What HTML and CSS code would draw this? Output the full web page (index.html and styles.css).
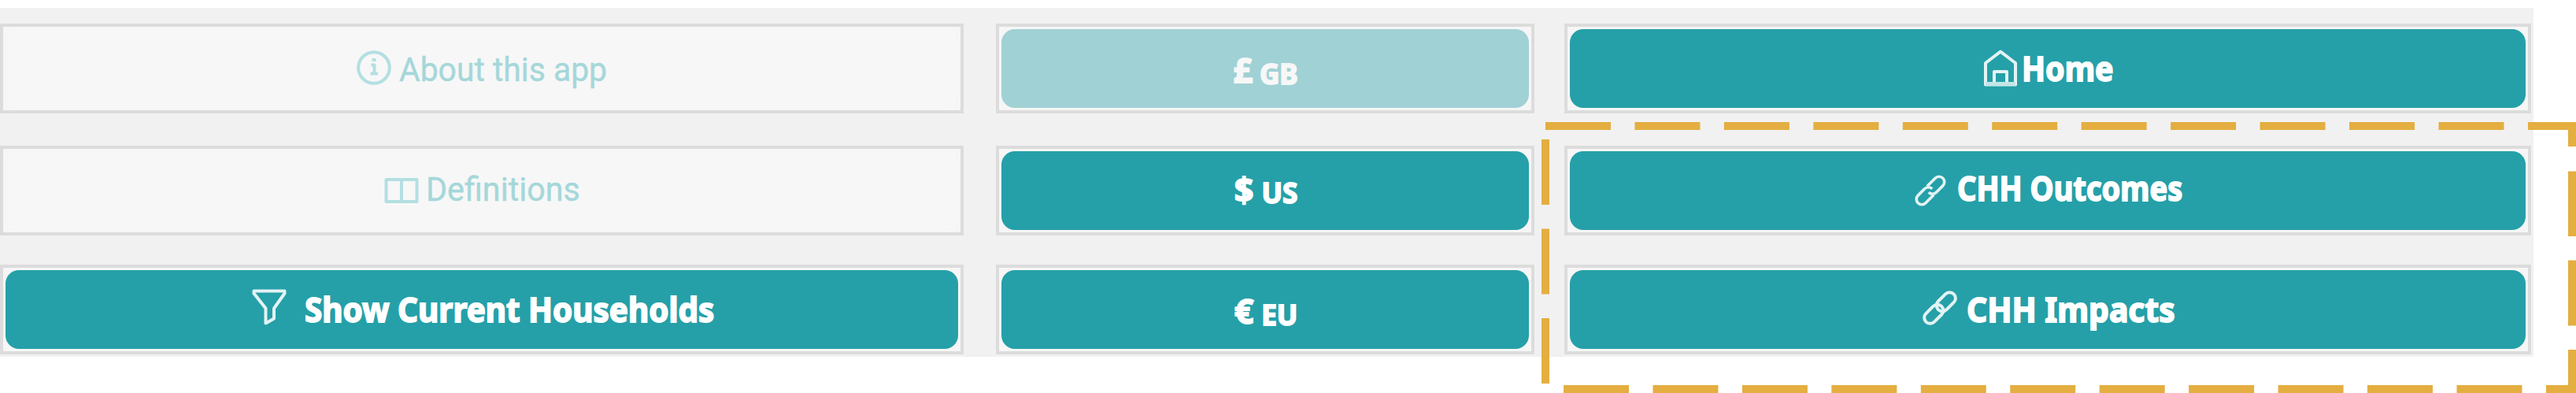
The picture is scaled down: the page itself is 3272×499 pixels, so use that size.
FILE: index.html
```html
<!DOCTYPE html>
<html lang="en">
<head>
<meta charset="utf-8">
<title>Household navigation</title>
<link rel="stylesheet" href="styles.css">
</head>
<body>
<main class="panel">
  <div class="cell"><button class="btn ghost about">
    <svg class="icon" width="44" height="44" viewBox="0 0 44 44"><circle cx="22" cy="22" r="19.8"/><path d="M18.500 18.500H22.500V29M17.500 29.500H27"/><path d="M19.500 12H24.500" stroke-width="4"/></svg>
    <span class="label">About this app</span></button></div>
  <div class="cell"><button class="btn muted gb"><span class="sign">£</span><span class="code">GB</span></button></div>
  <div class="cell"><button class="btn home">
    <svg class="icon" width="44" height="48" viewBox="0 0 44 48"><path d="M3 17.500L22 3L41 17.500V45H3Z"/><path d="M14 44V28.500H30V44"/><path class="soft" d="M3 44H41"/></svg>
    <span class="label">Home</span></button></div>

  <div class="cell"><button class="btn ghost definitions">
    <svg class="icon" width="44" height="34" viewBox="0 0 44 34"><path d="M2.500 3H41.500V31H2.500Z"/><path d="M22 3V33" stroke-width="4"/></svg>
    <span class="label">Definitions</span></button></div>
  <div class="cell"><button class="btn us"><span class="sign">$</span><span class="code">US</span></button></div>
  <div class="cell"><button class="btn outcomes">
    <svg class="icon" width="40" height="40" viewBox="0 0 44 44"><g transform="rotate(-45 22 22)"><path d="M21 29.500H5A7.500 7.500 0 0 1 5 14.500H18A7.500 7.500 0 0 1 25.500 22"/><path d="M23 14.500H39A7.500 7.500 0 0 1 39 29.500H26A7.500 7.500 0 0 1 18.500 22"/></g></svg>
    <span class="label">CHH Outcomes</span></button></div>

  <div class="cell"><button class="btn show">
    <svg class="icon" width="44" height="46" viewBox="0 0 44 46"><path d="M2.500 3H41.500V6L28 25V38L17.500 44V25L2.500 6Z"/></svg>
    <span class="label">Show Current Households</span></button></div>
  <div class="cell"><button class="btn eu"><span class="sign">€</span><span class="code">EU</span></button></div>
  <div class="cell"><button class="btn impacts">
    <svg class="icon" width="44" height="44" viewBox="0 0 44 44"><g transform="rotate(-45 22 22)"><rect x="-3" y="14.500" width="28" height="15" rx="7.500"/><rect x="19" y="14.500" width="28" height="15" rx="7.500"/></g></svg>
    <span class="label">CHH Impacts</span></button></div>
</main>
<svg class="highlight" width="3272" height="499" viewBox="0 0 3272 499">
  <path d="M1963 160H3272" stroke-dasharray="83 30.450"/>
  <path d="M1986 494H3272" stroke-dasharray="83 30.450"/>
  <path d="M1963 177V489" stroke-dasharray="83 30.500"/>
  <path d="M3267 155V186M3267 217.500V300M3267 330.500V413.500M3267 444V499"/>
</svg>
</body>
</html>
```
FILE: styles.css
```css
* { box-sizing: border-box; }
body {
  margin: 0;
  width: 3272px;
  height: 499px;
  padding-top: 10px;
  overflow: hidden;
  background: #fff;
  font-family: "Noto Sans", sans-serif;
}
.panel {
  display: grid;
  grid-template-columns: 1265px 722px 1228px;
  grid-template-rows: 114px 114px 114px;
  row-gap: 40px;
  width: 3218px;
  height: 443px;
  padding: 20px 0 0;
  background: #f1f1f1;
}
.cell {
  height: 114px;
  padding: 3px;
  border: 4px solid #dcdcdc;
  background: #f6f6f6;
}
.cell:nth-child(3n+1) { margin-right: 41px; }
.cell:nth-child(3n+2) { margin-right: 38px; }
.cell:nth-child(n+4) { margin-top: 1px; }
.cell:nth-child(n+7) { margin-top: -2px; }
.btn {
  display: flex;
  align-items: center;
  justify-content: center;
  width: 100%;
  height: 100px;
  padding: 0;
  border: 0;
  border-radius: 17px;
  background: #25a0a8;
  color: #fff;
  font: 700 43px/60px "Noto Sans", sans-serif;
  white-space: nowrap;
  -webkit-text-stroke: 1.800px currentColor;
}
.ghost {
  background: #f7f7f7;
  color: #a5d7da;
  font-family: Roboto, sans-serif;
  font-weight: 400;
  -webkit-text-stroke: 0.400px currentColor;
}
.muted { background: #a0d1d5; color: #f7f7f7; }
.icon {
  flex: none;
  fill: none;
  stroke: #e3f3f4;
  stroke-width: 4;
  stroke-linejoin: round;
}
.ghost .icon { stroke: #b3dfe2; }
.soft { stroke: #c4e5e7; stroke-width: 5; }
.label { transform-origin: left center; }

.about { gap: 10px; }
.about .icon { transform: translateY(-1px); }
.about .label { transform: translateY(1px) scaleX(0.95); margin-right: -14px; }

.definitions { gap: 9px; }
.definitions .label { transform: translateY(-2.500px) scaleX(0.96); margin-right: -9px; }

.show { gap: 23px; padding-left: 3px; }
.show .icon { transform: translateY(-3.500px); }
.show .label { transform: translateY(-0.500px) scaleX(0.94); margin-right: -33px; }

.home { gap: 5px; padding-left: 1px; }
.home .icon { transform: translateY(-0.500px); }
.home .label { transform: scaleX(0.915); margin-right: -11px; }

.outcomes { gap: 14px; padding-left: 3px; }
.outcomes .label { transform: translateY(-3.500px) scaleX(0.885); margin-right: -37px; }

.impacts { gap: 12px; padding-left: 3px; }
.impacts .icon { transform: translateY(-2px); }
.impacts .label { transform: translateY(-0.500px) scaleX(0.95); margin-right: -13px; }

.sign { font-size: 43px; margin-right: 8px; }
.code { font-size: 35px; }
.gb .sign { transform: translateY(2px); }
.gb .code { transform: translate(1px, 7px); }
.us .sign { transform: translateY(-1px); }
.us .code { transform: translate(2px, 3px); }
.eu .sign { transform: translateY(2px); }
.eu .code { transform: translate(2px, 7px); }
.highlight {
  position: absolute;
  top: 0;
  left: 0;
  fill: none;
  stroke: #e4ae40;
  stroke-width: 10;
  pointer-events: none;
}
```
